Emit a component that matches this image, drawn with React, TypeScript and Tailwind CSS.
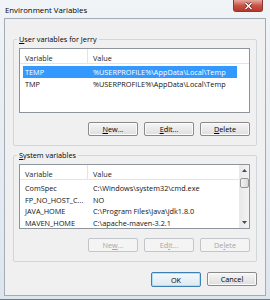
import React from "react";

const FONT = { fontFamily: '"Open Sans", "Noto Sans", Arial, sans-serif' };

function Btn({
  children,
  disabled,
  primary,
}: {
  children: React.ReactNode;
  disabled?: boolean;
  primary?: boolean;
}) {
  const base =
    "w-[50px] h-[14px] rounded-[2px] border flex items-center justify-center text-[7.3px] leading-[10px]";
  if (disabled)
    return (
      <div className={`${base} border-[#c2c6ca] bg-[#f4f4f4] text-[#a6a6a6]`}>{children}</div>
    );
  if (primary)
    return (
      <div
        className={`${base} h-[15px] border-[#3c7fb1] bg-gradient-to-b from-[#f4f9fc] to-[#dde9f2] text-black shadow-[inset_0_0_0_1px_#b5dcf5]`}
      >
        {children}
      </div>
    );
  return (
    <div
      className={`${base} border-[#8a8a8a] bg-gradient-to-b from-[#f6f6f6] to-[#dedede] text-black shadow-[inset_0_0_0_1px_#fbfbfb]`}
    >
      {children}
    </div>
  );
}

type Row = { name: string; value: string; selected?: boolean };

function ListView({ rows, scrollbar }: { rows: Row[]; scrollbar?: boolean }) {
  return (
    <div className="mt-[4px] h-[65px] border border-[#8e949c] bg-white flex overflow-hidden">
      <div className="flex-1 flex flex-col">
        <div className="h-[15px] flex border-b border-[#e2e4e7] text-[7.3px] leading-[10px] text-[#1e1e1e]">
          <div className="w-[68px] border-r border-[#e2e4e7] pl-[5px] pt-[4px]">Variable</div>
          <div className="flex-1 pl-[5px] pt-[4px]">Value</div>
        </div>
        <div className="mt-[2px] flex flex-col">
          {rows.map((r) => (
            <div
              key={r.name}
              className={`ml-[3px] w-[214px] h-[11.7px] flex items-center text-[7.3px] leading-[10px] whitespace-nowrap ${
                r.selected ? "bg-[#3399ff] text-white" : "text-[#111]"
              }`}
            >
              <div className="w-[65px] pl-[2px]">{r.name}</div>
              <div className="pl-[5px]">{r.value}</div>
            </div>
          ))}
        </div>
      </div>
      {scrollbar && (
        <div className="w-[10px] bg-gradient-to-r from-[#e8e8e8] to-[#f3f3f3] flex flex-col items-center">
          <div className="h-[11px] w-full flex items-center justify-center">
            <svg width="5" height="3" viewBox="0 0 5 3">
              <path d="M0 3 L2.5 0 L5 3 Z" fill="#4a4a4a" />
            </svg>
          </div>
          <div className="mt-[2px] w-[9px] h-[10px] rounded-[2px] border border-[#979797] bg-gradient-to-r from-[#f4f4f4] to-[#dadada]" />
          <div className="flex-1" />
          <div className="h-[11px] w-full flex items-center justify-center">
            <svg width="5" height="3" viewBox="0 0 5 3">
              <path d="M0 0 L2.5 3 L5 0 Z" fill="#4a4a4a" />
            </svg>
          </div>
        </div>
      )}
    </div>
  );
}

function Group({
  label,
  children,
}: {
  label: React.ReactNode;
  children: React.ReactNode;
}) {
  return (
    <fieldset className="h-[112px] border border-[#cfd6dc] rounded-[2px] pl-[5px] pr-[6px]">
      <legend className="-ml-[2px] px-[2px] text-[7.3px] leading-[10px] text-black">{label}</legend>
      {children}
    </fieldset>
  );
}

export default function App() {
  return (
    <div
      className="w-[270px] h-[300px] overflow-hidden bg-gradient-to-b from-[#f1f4f7] to-[#dde5ed] border-b border-[#6f7a87] flex flex-col"
      style={FONT}
    >
      <div className="h-[18px] flex justify-between items-start">
        <span className="pl-[5px] pt-[5px] text-[7.8px] leading-[10px] text-black">
          Environment Variables
        </span>
        <div className="mr-[7px] w-[30px] h-[12px] rounded-b-[3px] border border-t-0 border-[#8a3a32] bg-gradient-to-b from-[#e6a89c] via-[#c9554a] to-[#b8362b] flex items-center justify-center">
          <svg width="9" height="8" viewBox="0 0 9 8">
            <path d="M1.5 1 L7.5 7 M7.5 1 L1.5 7" stroke="#5a1d18" strokeWidth="2.6" />
            <path d="M1.5 1 L7.5 7 M7.5 1 L1.5 7" stroke="#ffffff" strokeWidth="1.5" />
          </svg>
        </div>
      </div>
      <div className="mx-[4px] h-[278px] border border-[#a3adb8] bg-[#f0f0f0] flex flex-col px-[8px] pt-[15px]">
        <Group
          label={
            <>
              <span className="underline">U</span>ser variables for Jerry
            </>
          }
        >
          <ListView
            rows={[
              { name: "TEMP", value: "%USERPROFILE%\\AppData\\Local\\Temp", selected: true },
              { name: "TMP", value: "%USERPROFILE%\\AppData\\Local\\Temp" },
            ]}
          />
          <div className="mt-[9px] flex justify-end gap-[6px]">
            <Btn>
              <span className="underline">N</span>ew...
            </Btn>
            <Btn>
              <span className="underline">E</span>dit...
            </Btn>
            <Btn>
              <span className="underline">D</span>elete
            </Btn>
          </div>
        </Group>
        <div className="mt-[4px]">
          <Group
            label={
              <>
                <span className="underline">S</span>ystem variables
              </>
            }
          >
            <ListView
              scrollbar
              rows={[
                { name: "ComSpec", value: "C:\\Windows\\system32\\cmd.exe" },
                { name: "FP_NO_HOST_C...", value: "NO" },
                { name: "JAVA_HOME", value: "C:\\Program Files\\Java\\jdk1.8.0" },
                { name: "MAVEN_HOME", value: "C:\\apache-maven-3.2.1" },
              ]}
            />
            <div className="mt-[9px] flex justify-end gap-[6px]">
              <Btn disabled>
                Ne<span className="underline">w</span>...
              </Btn>
              <Btn disabled>
                Ed<span className="underline">i</span>t...
              </Btn>
              <Btn disabled>
                De<span className="underline">l</span>ete
              </Btn>
            </div>
          </Group>
        </div>
        <div className="mt-[10px] flex justify-end gap-[6px]">
          <Btn primary>OK</Btn>
          <Btn>Cancel</Btn>
        </div>
      </div>
    </div>
  );
}
